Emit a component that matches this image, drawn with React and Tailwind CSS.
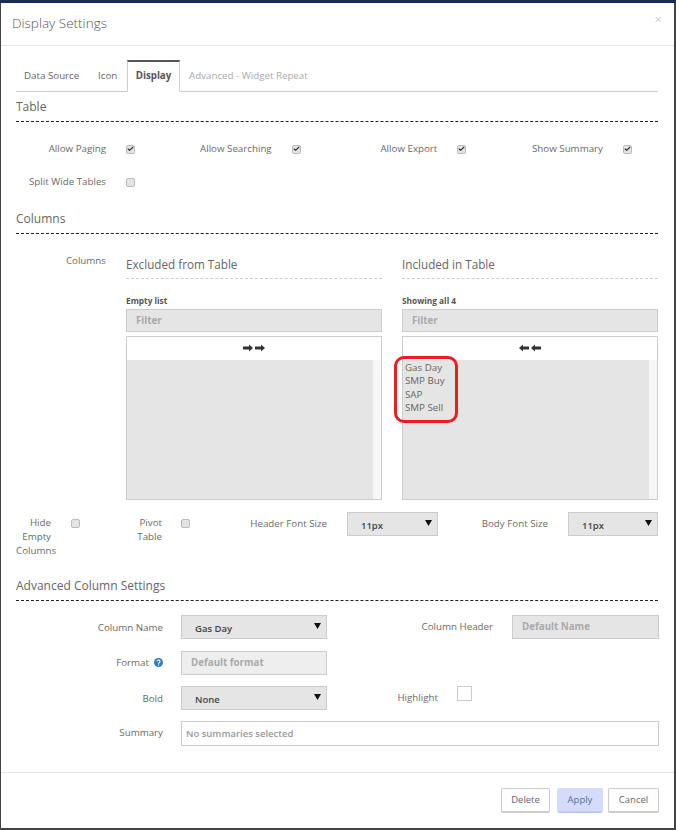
import { Check } from "lucide-react";

const Label = ({ children, className = "" }) => (
  <div className={`text-[9.75px] leading-[14px] text-[#6a6a6a] text-right shrink-0 ${className}`}>{children}</div>
);

const CheckBox = ({ checked, className = "" }) => (
  <div className={`w-[9px] h-[9px] rounded-[2px] border border-[#bbb] bg-[#e4e4e4] flex items-center justify-center shrink-0 ${className}`}>
    {checked && <Check className="size-[8px] text-[#333]" strokeWidth={4} />}
  </div>
);

const SectionTitle = ({ children, className = "" }) => (
  <div className={`text-[12px] leading-[16px] text-[#666] border-b border-dashed border-[#222] pb-[6px] ${className}`}>{children}</div>
);

const Select = ({ value, className = "" }) => (
  <div className={`h-[24px] shrink-0 bg-[#e5e5e5] border border-[#ccc] flex justify-between pl-[13px] pr-[5px] ${className}`}>
    <span className="text-[9.5px] font-semibold text-[#444] leading-[25px]">{value}</span>
    <svg width="7" height="6" viewBox="0 0 7 6" className="mt-[7px] text-[#111]">
      <path d="M0 0h7L3.500 6z" fill="currentColor" />
    </svg>
  </div>
);

const Arrows = ({ left }) => (
  <svg width="23" height="8" viewBox="0 0 23 8" className="text-[#333]">
    <path
      d={left
        ? "M0 4l4-3.500v2h6v3h-6v2zM12 4l4-3.500v2h6v3h-6v2z"
        : "M10 4l-4-3.500v2h-6v3h6v2zM22 4l-4-3.500v2h-6v3h6v2z"}
      fill="currentColor"
    />
  </svg>
);

const ListBox = ({ title, count, left, items = [] }) => (
  <div className="w-[256px]">
    <div className="text-[11.7px] leading-[16px] text-[#666] border-b border-dashed border-[#ccc] pb-[6px]">{title}</div>
    <div className="text-[8.3px] font-bold text-[#555] leading-[11px] mt-[16px]">{count}</div>
    <div className="h-[23px] mt-[3px] bg-[#e5e5e5] border border-[#ccc] pl-[9px] text-[9.75px] font-bold text-[#aaa] leading-[21px]">Filter</div>
    <div className="h-[24px] mt-[4px] pb-[2px] bg-white border border-[#ccc] border-b-0 flex items-center justify-center">
      <Arrows left={left} />
    </div>
    <div className="h-[140px] bg-[#f6f6f6] border border-t-0 border-[#ccc] flex">
      <div className="w-[246px] bg-[#e5e5e5] pl-[2px] pt-[1px] text-[9.75px] leading-[13.4px] text-[#666]">
        {items.map((item) => <div key={item}>{item}</div>)}
      </div>
    </div>
  </div>
);

const Button = ({ children, className = "" }) => (
  <button className={`h-[25px] text-[9.5px] rounded-[2px] border border-[#ccc] border-b-2 text-[#666] bg-white ${className}`}>{children}</button>
);

export default function App() {
  return (
    <div
      className="relative w-[676px] h-[830px] bg-[#444] border-t-[3px] border-t-[#1b2a5a] pl-[1px] pr-[2px] pb-[2px] overflow-hidden"
      style={{ fontFamily: '"Open Sans", sans-serif' }}
    >
      <div className="h-full bg-white flex flex-col">
        <header className="h-[43px] shrink-0 border-b border-[#e5e5e5] pl-[11px] pr-[12px] flex items-center justify-between">
          <h4 className="text-[13.5px] font-light text-[#555] -mt-[1px]">Display Settings</h4>
          <span className="text-[13px] text-[#ccc] leading-none -mt-[10px]">×</span>
        </header>

        <div className="flex-1 pl-[15px] pr-[16px]">
          <nav className="mt-[14px] h-[32px] border-b border-[#ccc] flex text-[9.75px] leading-[31px] pl-[8px]">
            <span className="text-[#666] w-[74px]">Data Source</span>
            <span className="text-[#666] w-[29px]">Icon</span>
            <span className="h-[32px] w-[53px] border border-[#ccc] border-b-white border-t-2 border-t-[#555] bg-white text-center font-bold text-[#555] leading-[28px]">Display</span>
            <span className="text-[#aaa] ml-[9px]">Advanced - Widget Repeat</span>
          </nav>

          <SectionTitle className="mt-[7px]">Table</SectionTitle>

          <div className="grid grid-cols-[repeat(4,165.67px)] mt-[20px] h-[14px]">
            {["Allow Paging", "Allow Searching", "Allow Export", "Show Summary"].map((label) => (
              <div key={label} className="flex items-center">
                <Label className="w-[90px]">{label}</Label>
                <CheckBox checked className="ml-[20px]" />
              </div>
            ))}
          </div>
          <div className="flex items-center mt-[19px] h-[14px]">
            <Label className="w-[90px]">Split Wide Tables</Label>
            <CheckBox className="ml-[20px]" />
          </div>

          <SectionTitle className="mt-[22px]">Columns</SectionTitle>

          <div className="flex mt-[20px]">
            <Label className="w-[90px]">Columns</Label>
            <div className="ml-[20px] flex gap-[20px] mt-[2px]">
              <ListBox title="Excluded from Table" count="Empty list" />
              <ListBox title="Included in Table" count="Showing all 4" left items={["Gas Day", "SMP Buy", "SAP", "SMP Sell"]} />
            </div>
          </div>

          <div className="flex mt-[12px] h-[44px]">
            <Label className="w-[35px] mt-[4px]">Hide Empty Columns</Label>
            <CheckBox className="ml-[20px] mt-[7px]" />
            <Label className="w-[30px] ml-[52px] mt-[4px]">Pivot Table</Label>
            <CheckBox className="ml-[19px] mt-[7px]" />
            <Label className="w-[78px] ml-[59px] mt-[5px]">Header Font Size</Label>
            <Select value="11px" className="w-[91px] ml-[20px]" />
            <Label className="w-[68px] ml-[42px] mt-[5px]">Body Font Size</Label>
            <Select value="11px" className="w-[90px] ml-[20px]" />
          </div>

          <SectionTitle className="mt-[22px]">Advanced Column Settings</SectionTitle>

          <div className="flex mt-[14px]">
            <Label className="w-[147px] mt-[6px]">Column Name</Label>
            <Select value="Gas Day" className="w-[146px] ml-[18px]" />
            <Label className="w-[166px] mt-[5px]">Column Header</Label>
            <div className="w-[147px] shrink-0 ml-[19px] h-[24px] bg-[#e5e5e5] border border-[#ccc] pl-[9px] text-[9.75px] font-bold text-[#aaa] leading-[22px]">Default Name</div>
          </div>
          <div className="flex mt-[12px]">
            <div className="w-[147px] shrink-0 flex justify-end items-start gap-[5px] mt-[5px]">
              <Label>Format</Label>
              <svg width="9" height="9" viewBox="0 0 9 9" className="mt-[2px]">
                <circle cx="4.500" cy="4.500" r="4.500" fill="#337ab7" />
                <path d="M3 3.500a1.500 1.500 0 1 1 2.200 1.300c-.5.3-.7.500-.7 1" stroke="#fff" strokeWidth="1.100" fill="none" />
                <rect x="4" y="6.500" width="1.100" height="1.100" fill="#fff" />
              </svg>
            </div>
            <div className="w-[146px] shrink-0 ml-[18px] h-[24px] bg-[#eee] border border-[#ccc] pl-[9px] text-[9.75px] font-bold text-[#aaa] leading-[22px]">Default format</div>
          </div>
          <div className="flex mt-[11px]">
            <Label className="w-[147px] mt-[6px]">Bold</Label>
            <Select value="None" className="w-[146px] ml-[18px]" />
            <Label className="w-[111px] mt-[5px]">Highlight</Label>
            <div className="w-[15px] h-[15px] shrink-0 ml-[19px] border border-[#ccc] bg-white" />
          </div>
          <div className="flex mt-[11px]">
            <Label className="w-[147px] mt-[5px]">Summary</Label>
            <div className="w-[478px] shrink-0 ml-[18px] h-[25px] bg-white border border-[#ccc] pl-[4px] text-[9.5px] font-semibold text-[#999] leading-[24px]">No summaries selected</div>
          </div>
        </div>

        <footer className="h-[56px] shrink-0 border-t border-[#e5e5e5] pr-[15px] pt-[15px] flex justify-end">
          <Button className="w-[49px]">Delete</Button>
          <Button className="w-[46px] ml-[7px] !bg-[#d5dcfb] !border-[#d5dcfb] !border-b-[#c0c9f2] !text-[#5a6a9a]">Apply</Button>
          <Button className="w-[51px] ml-[5px]">Cancel</Button>
        </footer>
      </div>

      {/* red highlight drawn over the included list */}
      <div className="absolute left-[394px] top-[353px] w-[64px] h-[67px] border-[3px] border-[#ed1c24] rounded-[10px]" />
    </div>
  );
}
